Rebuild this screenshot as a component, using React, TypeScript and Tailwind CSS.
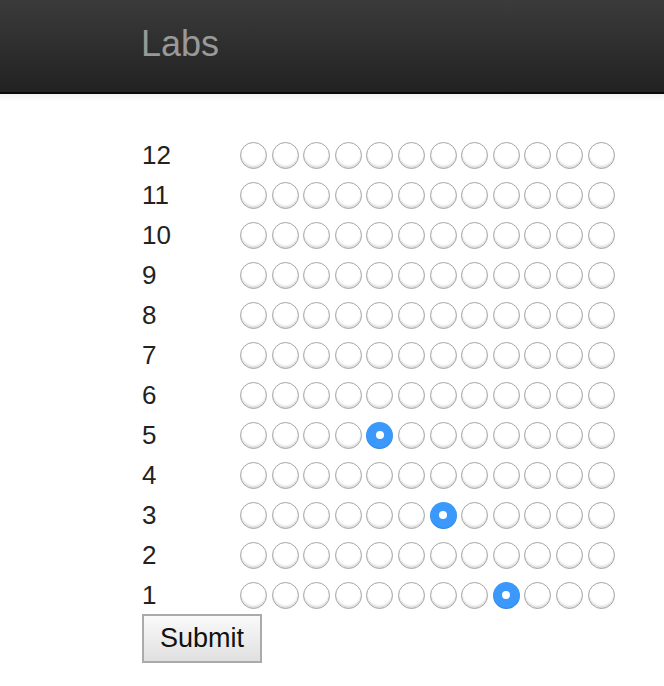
import { useState } from 'react';

const ROWS = [12, 11, 10, 9, 8, 7, 6, 5, 4, 3, 2, 1];
const COLS = Array.from({ length: 12 }, (_, i) => i);

function Radio({ checked, onClick }: { checked: boolean; onClick: () => void }) {
  if (checked) {
    return (
      <button
        onClick={onClick}
        className="w-[27px] h-[27px] rounded-full bg-[#3b99fc] flex items-center justify-center shadow-[inset_0_-1px_1px_rgba(0,0,0,0.15)]"
      >
        <span className="w-[8px] h-[8px] rounded-full bg-white" />
      </button>
    );
  }
  return (
    <button
      onClick={onClick}
      className="w-[27px] h-[27px] rounded-full bg-white border border-[#a4a4a4] shadow-[inset_0_-2px_2px_rgba(0,0,0,0.14)]"
    />
  );
}

export default function App() {
  // selected column per row
  const [picked, setPicked] = useState<Record<number, number>>({ 5: 4, 3: 6, 1: 8 });

  return (
    <div className="min-h-[686px] bg-white font-['Liberation_Sans',Arial,sans-serif] text-[#222]">
      <header className="h-[94px] bg-gradient-to-b from-[#3b3b3b] to-[#222] border-b-2 border-[#0a0a0a] flex items-center pl-[141px]">
        <span className="text-[36px] text-[#999] leading-none -mt-[4px]">Labs</span>
      </header>
      <div className="h-[8px] bg-gradient-to-b from-[#f3f3f3] to-white" />
      <main className="pl-[142px] pt-[33px]">
        {ROWS.map((row) => (
          <div key={row} className="flex items-center h-[40px]">
            <span className="w-[98px] text-[26px] leading-none text-[#222]">{row}</span>
            <div className="flex gap-[4.6px]">
              {COLS.map((c) => (
                <Radio
                  key={c}
                  checked={picked[row] === c}
                  onClick={() => setPicked({ ...picked, [row]: c })}
                />
              ))}
            </div>
          </div>
        ))}
        <button className="mt-[-1px] w-[120px] h-[49px] border-2 border-[#aaa] bg-gradient-to-b from-[#fafafa] to-[#e0e0e0] text-[27px] text-[#111] leading-none">
          Submit
        </button>
      </main>
    </div>
  );
}
